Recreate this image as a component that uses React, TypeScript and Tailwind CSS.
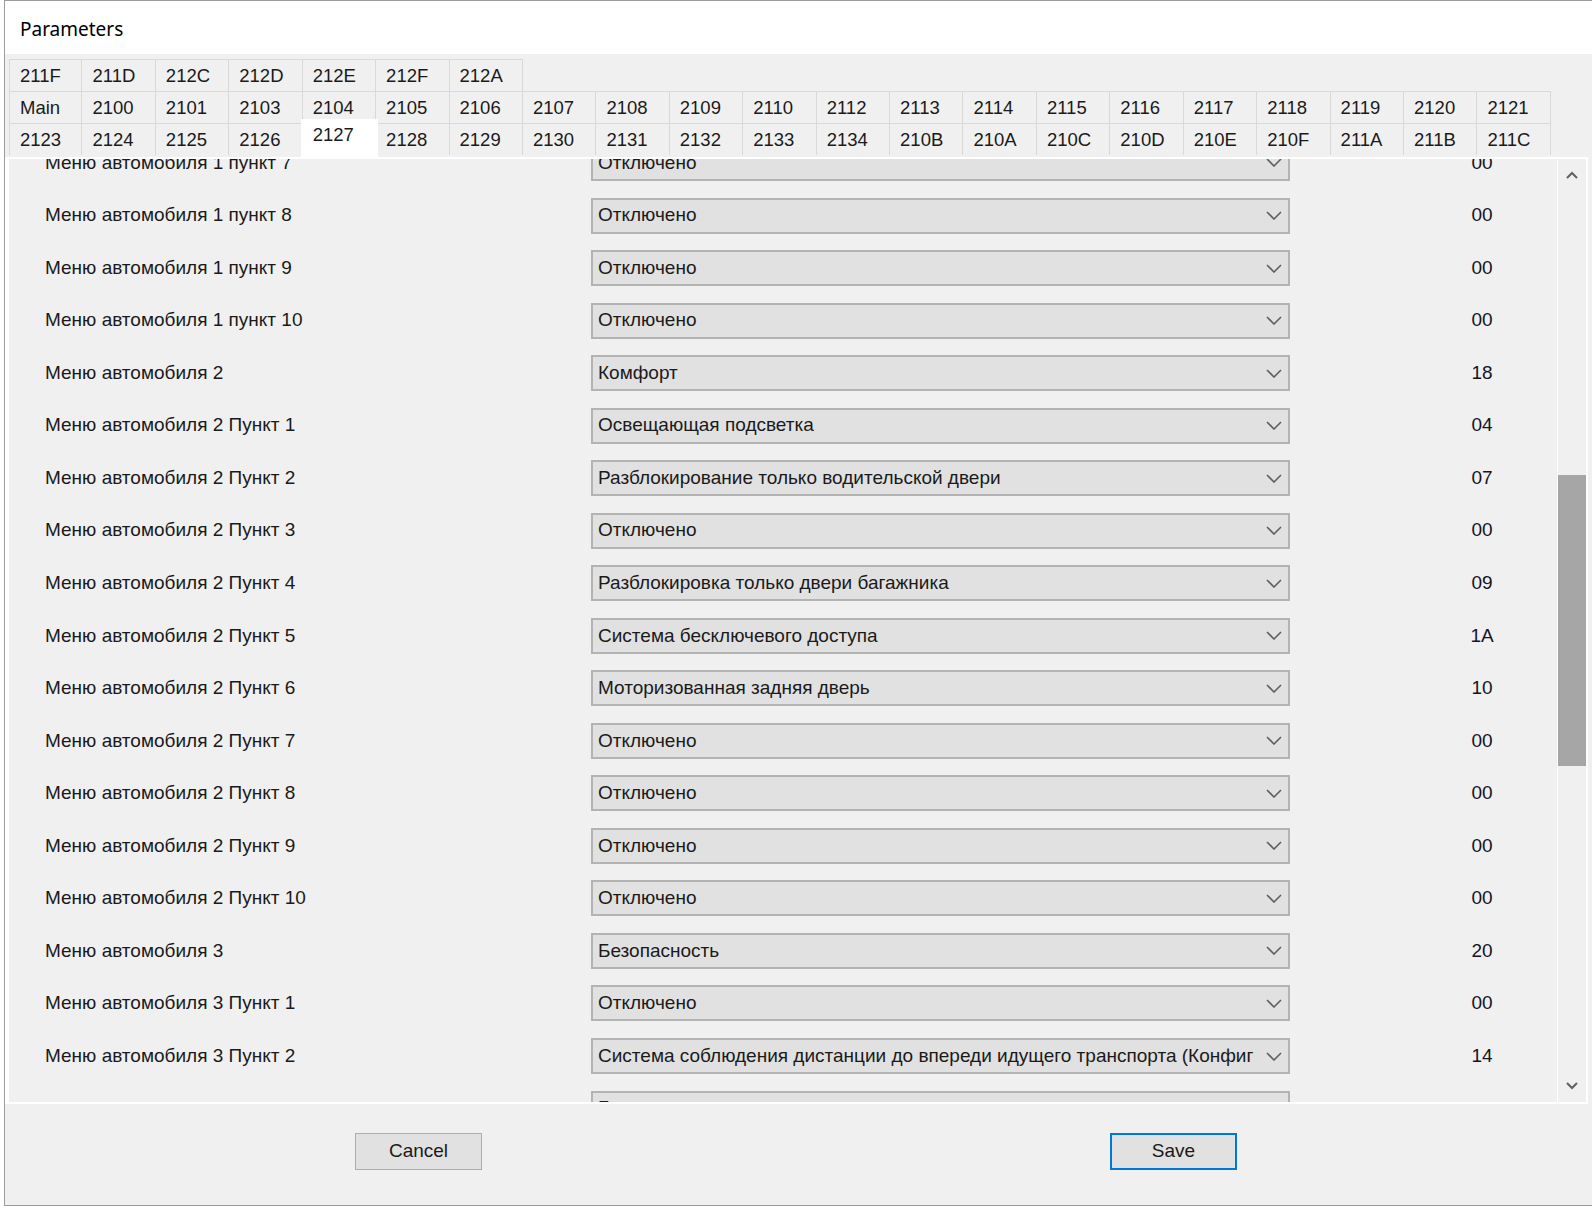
import React from 'react';

const TOP_ROW = ['211F', '211D', '212C', '212D', '212E', '212F', '212A'];
const MID_ROW = [
    'Main', '2100', '2101', '2103', '2104', '2105', '2106', '2107', '2108', '2109', '2110',
    '2112', '2113', '2114', '2115', '2116', '2117', '2118', '2119', '2120', '2121',
];
const BOTTOM_ROW = [
    '2123', '2124', '2125', '2126', '2127', '2128', '2129', '2130', '2131', '2132', '2133',
    '2134', '210B', '210A', '210C', '210D', '210E', '210F', '211A', '211B', '211C',
];
const ACTIVE_TAB = '2127';

interface Param {
    label: string;
    value: string;
    code: string;
}

const OFF = 'Отключено';

const PARAMS: Param[] = [
    { label: 'Меню автомобиля 1 пункт 7', value: OFF, code: '00' },
    { label: 'Меню автомобиля 1 пункт 8', value: OFF, code: '00' },
    { label: 'Меню автомобиля 1 пункт 9', value: OFF, code: '00' },
    { label: 'Меню автомобиля 1 пункт 10', value: OFF, code: '00' },
    { label: 'Меню автомобиля 2', value: 'Комфорт', code: '18' },
    { label: 'Меню автомобиля 2 Пункт 1', value: 'Освещающая подсветка', code: '04' },
    { label: 'Меню автомобиля 2 Пункт 2', value: 'Разблокирование только водительской двери', code: '07' },
    { label: 'Меню автомобиля 2 Пункт 3', value: OFF, code: '00' },
    { label: 'Меню автомобиля 2 Пункт 4', value: 'Разблокировка только двери багажника', code: '09' },
    { label: 'Меню автомобиля 2 Пункт 5', value: 'Система бесключевого доступа', code: '1A' },
    { label: 'Меню автомобиля 2 Пункт 6', value: 'Моторизованная задняя дверь', code: '10' },
    { label: 'Меню автомобиля 2 Пункт 7', value: OFF, code: '00' },
    { label: 'Меню автомобиля 2 Пункт 8', value: OFF, code: '00' },
    { label: 'Меню автомобиля 2 Пункт 9', value: OFF, code: '00' },
    { label: 'Меню автомобиля 2 Пункт 10', value: OFF, code: '00' },
    { label: 'Меню автомобиля 3', value: 'Безопасность', code: '20' },
    { label: 'Меню автомобиля 3 Пункт 1', value: OFF, code: '00' },
    {
        label: 'Меню автомобиля 3 Пункт 2',
        value: 'Система соблюдения дистанции до впереди идущего транспорта (Конфиг',
        code: '14',
    },
    // next row is only peeking in under the list edge
    { label: '', value: 'Блокировка', code: '' },
];

function Tab({ label, first }: { label: string; first?: boolean }) {
    if (label === ACTIVE_TAB) {
        return (
            <div className="relative z-10 -mx-[2px] -mt-[4px] h-[38px] w-[77.43px] shrink-0 bg-white pl-[12px] pt-[4px] leading-[24px]">
                {label}
            </div>
        );
    }
    return (
        <div
            className={`flex h-[32px] w-[73.43px] shrink-0 items-center border-t border-r border-[#d9d9d9] pl-[10px] ${
                first ? 'border-l' : ''
            }`}
        >
            {label}
        </div>
    );
}

function TabRow({ tabs }: { tabs: string[] }) {
    return (
        <div className="flex">
            {tabs.map((t, i) => (
                <Tab key={t} label={t} first={i === 0} />
            ))}
        </div>
    );
}

function ComboChevron() {
    return (
        <svg width="16" height="9" viewBox="0 0 16 9" className="shrink-0">
            <path d="M1 1 L8 8 L15 1" fill="none" stroke="#5f5f5f" strokeWidth="1.6" />
        </svg>
    );
}

function ParamRow({ p }: { p: Param }) {
    return (
        <div className="flex h-[52.54px] items-center pl-[36px]">
            <div className="w-[546px] shrink-0 whitespace-nowrap">{p.label}</div>
            <div className="flex h-[36px] w-[699px] shrink-0 items-center border-2 border-[#b3b3b3] bg-[#e1e1e1] pl-[5px] pr-[6px]">
                <div className="mr-[12px] flex-1 overflow-hidden whitespace-nowrap">{p.value}</div>
                <ComboChevron />
            </div>
            <div className="ml-[142px] w-[100px] shrink-0 text-center text-[#141428]">{p.code}</div>
        </div>
    );
}

function ScrollArrow({ up }: { up?: boolean }) {
    return (
        <div className="flex h-[32px] items-center justify-center">
            <svg width="12" height="8" viewBox="0 0 12 8">
                <path
                    d={up ? 'M1 7 L6 2 L11 7' : 'M1 1 L6 6 L11 1'}
                    fill="none"
                    stroke="#606060"
                    strokeWidth="2"
                />
            </svg>
        </div>
    );
}

export default function App() {
    return (
        <div className="h-[1207px] w-[1592px] overflow-hidden bg-white pl-[4px] font-['Liberation_Sans',Arial,sans-serif] text-[19px] text-[#1a1a1a]">
            <div className="flex h-[1206px] flex-col border-t border-b border-l border-[#9c9c9c] bg-[#f0f0f0]">
                <div className="flex h-[53px] items-center bg-white pl-[15px] pt-[4px] font-['Noto_Sans',sans-serif] text-[19px] text-black">
                    Parameters
                </div>

                <div className="pl-[4px] pt-[5px] text-[18.5px]">
                    <TabRow tabs={TOP_ROW} />
                    <TabRow tabs={MID_ROW} />
                    <TabRow tabs={BOTTOM_ROW} />
                </div>

                <div className="mr-[4px] flex h-[947px] border-t-2 border-r-2 border-b-2 border-l-[4px] border-white">
                    <div className="flex-1 overflow-hidden">
                        <div className="-mt-[22.3px]">
                            {PARAMS.map((p, i) => (
                                <ParamRow key={i} p={p} />
                            ))}
                        </div>
                    </div>
                    <div className="flex w-[29px] flex-col border-l border-white bg-[#f0f0f0]">
                        <ScrollArrow up />
                        <div className="flex-1">
                            <div className="mt-[284px] h-[291px] bg-[#a6a6a6]" />
                        </div>
                        <ScrollArrow />
                    </div>
                </div>

                <div className="flex pt-[29px] pl-[350px]">
                    <button className="flex h-[37px] w-[127px] items-center justify-center border border-[#adadad] bg-[#e1e1e1]">
                        Cancel
                    </button>
                    <button className="ml-[628px] flex h-[37px] w-[127px] items-center justify-center border-2 border-[#0078d7] bg-[#e1e1e1]">
                        Save
                    </button>
                </div>
            </div>
        </div>
    );
}
